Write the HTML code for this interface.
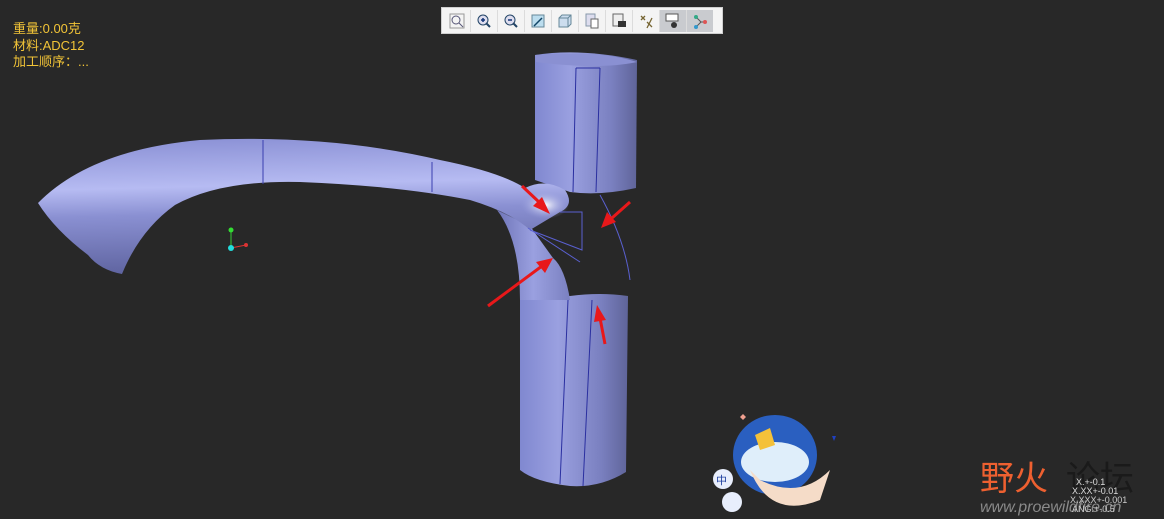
<!DOCTYPE html>
<html><head><meta charset="utf-8"><style>
html,body{margin:0;padding:0;background:#282828;width:1164px;height:519px;overflow:hidden;font-family:"Liberation Sans","Noto Sans CJK SC",sans-serif}
.info{position:absolute;left:13px;top:21px;color:#f2c437;font-size:13px;line-height:16.5px}
.tb{position:absolute;left:441px;top:7px;width:282px;height:27px;background:#f4f4f4;border:1px solid #cfcfcf;box-sizing:border-box;display:flex;padding:2px 2px}
.tb div{width:26px;height:22px;border-right:1px solid #dcdcdc;display:flex;align-items:center;justify-content:center}
.tb div.on{background:#c9cbcf}
</style></head><body>
<svg width="1164" height="519" style="position:absolute;left:0;top:0">
<defs>
<linearGradient id="cyl" x1="0" x2="1" y1="0" y2="0">
<stop offset="0" stop-color="#8088d0"/><stop offset="0.35" stop-color="#9aa0e0"/><stop offset="0.75" stop-color="#7a80c0"/><stop offset="1" stop-color="#5f6499"/></linearGradient>
<linearGradient id="spout" x1="0.3" x2="0.4" y1="0" y2="1">
<stop offset="0" stop-color="#8c92d6"/><stop offset="0.35" stop-color="#b6bbf2"/><stop offset="0.55" stop-color="#8a90d2"/><stop offset="1" stop-color="#5d629e"/></linearGradient>
<linearGradient id="bend" x1="0" x2="1" y1="0" y2="0">
<stop offset="0" stop-color="#6f75b8"/><stop offset="0.5" stop-color="#9aa0e0"/><stop offset="1" stop-color="#7a80c0"/></linearGradient>
<radialGradient id="hl" cx="0.5" cy="0.5" r="0.5"><stop offset="0" stop-color="#fff"/><stop offset="1" stop-color="#9aa0e0" stop-opacity="0"/></radialGradient>
</defs>
<!-- top cylinder -->
<path d="M535 55 Q580 48 637 60 L636 188 Q600 196 570 192 L535 180 Z" fill="url(#cyl)"/>
<path d="M535 55 Q600 50 637 62 Q600 70 536 62 Z" fill="#8a90d2"/>
<path d="M576 68 L573 192 M600 68 L596 192 M576 68 L600 68" stroke="#2a2fa0" stroke-width="1" fill="none"/>
<!-- bottom cylinder -->
<path d="M520 300 L570 296 Q600 292 628 296 L626 472 Q600 488 570 486 Q535 482 520 470 Z" fill="url(#cyl)"/>
<path d="M568 300 L560 484 M592 300 L583 486" stroke="#2a2fa0" stroke-width="1" fill="none"/>
<!-- bend -->
<path d="M497 210 Q520 240 520 300 L570 300 Q565 268 553 258 Q540 240 530 226 Z" fill="url(#bend)"/>
<!-- spout -->
<path d="M38 203 Q90 150 200 140 Q330 134 440 160 Q500 172 525 188 Q545 178 565 190 Q575 205 560 212 L530 230 Q510 212 470 200 Q400 186 300 182 Q220 180 175 205 Q140 230 122 274 Q100 270 88 255 Q55 230 38 203 Z" fill="url(#spout)"/>
<ellipse cx="545" cy="205" rx="24" ry="14" fill="url(#hl)"/>
<path d="M263 140 L263 184 M432 162 L432 192" stroke="#3a3fb0" stroke-width="1"/>
<path d="M530 230 L582 250 L582 212 L560 212 M528 228 L580 262 M600 195 Q625 240 630 280" stroke="#5a60d0" stroke-width="1" fill="none"/>
<!-- arrows -->
<g stroke="#e8181a" stroke-width="3" fill="#e8181a">
<line x1="522" y1="186" x2="540" y2="203"/><polygon points="550,214 533,206 542,197" stroke="none"/>
<line x1="630" y1="202" x2="612" y2="218"/><polygon points="601,228 607,212 616,222" stroke="none"/>
<line x1="488" y1="306" x2="542" y2="266"/><polygon points="553,258 545,273 536,262" stroke="none"/>
<line x1="605" y1="344" x2="600" y2="318"/><polygon points="597,305 606,320 594,322" stroke="none"/>
</g>
<!-- axis -->
<line x1="231" y1="230" x2="231" y2="248" stroke="#3c3" stroke-width="1"/>
<line x1="231" y1="248" x2="246" y2="245" stroke="#d33" stroke-width="1"/>
<circle cx="231" cy="230" r="2.5" fill="#3d3"/><circle cx="246" cy="245" r="2" fill="#d33"/><circle cx="231" cy="248" r="3" fill="#2dd"/>
<!-- mascot approximation -->
<ellipse cx="775" cy="455" rx="42" ry="40" fill="#2a5fc0"/>
<ellipse cx="775" cy="462" rx="34" ry="20" fill="#dfeefa"/>
<path d="M755 435 L770 428 L775 445 L760 450 Z" fill="#f4c13a"/>
<path d="M750 470 Q770 520 820 500 L830 470 Q800 500 760 480 Z" fill="#f5dcc8"/>
<circle cx="723" cy="479" r="10" fill="#e8eefc"/><text x="716" y="484" font-size="11" fill="#2040a0">中</text>
<circle cx="732" cy="502" r="10" fill="#e8eefc"/>
<path d="M740 417 l3 -3 l3 3 l-3 3z" fill="#f0a090"/>
<path d="M832 436 l4 0 l-2 5z" fill="#2040c0"/>
<!-- watermark -->
<text x="980" y="490" font-size="34" fill="#ee6030" font-family="Noto Sans CJK SC,sans-serif">野火</text>
<text x="1066" y="490" font-size="34" fill="#1a1a1a" font-family="Noto Sans CJK SC,sans-serif">论坛</text>
<text x="980" y="512" font-size="16" fill="#8a8a8a" font-style="italic">www.proewildfire.cn</text>
<text x="1076" y="485" font-size="9" fill="#ddd">X.+-0.1</text>
<text x="1072" y="494" font-size="9" fill="#ddd">X.XX+-0.01</text>
<text x="1070" y="503" font-size="9" fill="#ccc">X.XXX+-0.001</text>
<text x="1072" y="512" font-size="9" fill="#ccc">ANG.+-0.5</text>
</svg>
<div class="info">重量:0.00克<br>材料:ADC12<br>加工顺序：...</div>
<div class="tb">
<div><svg width="16" height="16"><rect x="1" y="1" width="14" height="14" fill="none" stroke="#999"/><circle cx="7" cy="7" r="4" fill="none" stroke="#557"/><line x1="10" y1="10" x2="14" y2="14" stroke="#557"/></svg></div>
<div><svg width="16" height="16"><circle cx="7" cy="7" r="5" fill="#dde" stroke="#246"/><path d="M5 7h4M7 5v4" stroke="#137" stroke-width="1.5"/><line x1="10" y1="10" x2="14" y2="14" stroke="#246" stroke-width="2"/></svg></div>
<div><svg width="16" height="16"><circle cx="7" cy="7" r="5" fill="#dde" stroke="#246"/><path d="M5 7h4" stroke="#137" stroke-width="1.5"/><line x1="10" y1="10" x2="14" y2="14" stroke="#246" stroke-width="2"/></svg></div>
<div><svg width="16" height="16"><rect x="2" y="2" width="12" height="12" fill="#bde" stroke="#689"/><line x1="4" y1="13" x2="12" y2="5" stroke="#146" stroke-width="1.5"/></svg></div>
<div><svg width="16" height="16"><path d="M2 5l3-3h9v9l-3 3H2z" fill="#cde" stroke="#689"/><path d="M2 5h9v9M11 5l3-3" stroke="#689" fill="none"/></svg></div>
<div><svg width="16" height="16"><rect x="2" y="1" width="9" height="12" fill="#dde" stroke="#89a"/><rect x="7" y="6" width="7" height="9" fill="#fff" stroke="#666"/></svg></div>
<div><svg width="16" height="16"><rect x="2" y="1" width="10" height="12" fill="#eee" stroke="#666"/><rect x="7" y="8" width="8" height="6" fill="#333"/></svg></div>
<div><svg width="16" height="16"><path d="M3 3l4 4M7 3L3 7M9 15l5-10M9 9l5 5" stroke="#763" stroke-width="1.3"/></svg></div>
<div class="on"><svg width="16" height="16"><rect x="1" y="1" width="12" height="7" fill="#fff" stroke="#555"/><circle cx="9" cy="12" r="3" fill="#333"/></svg></div>
<div class="on" style="border:none"><svg width="16" height="16"><line x1="4" y1="4" x2="9" y2="9" stroke="#555"/><line x1="9" y1="9" x2="4" y2="14" stroke="#555"/><line x1="9" y1="9" x2="13" y2="9" stroke="#555"/><circle cx="4" cy="4" r="2" fill="#3a8"/><circle cx="4" cy="14" r="2" fill="#39c"/><circle cx="13" cy="9" r="2" fill="#d55"/></svg></div>
</div>
</body></html>
